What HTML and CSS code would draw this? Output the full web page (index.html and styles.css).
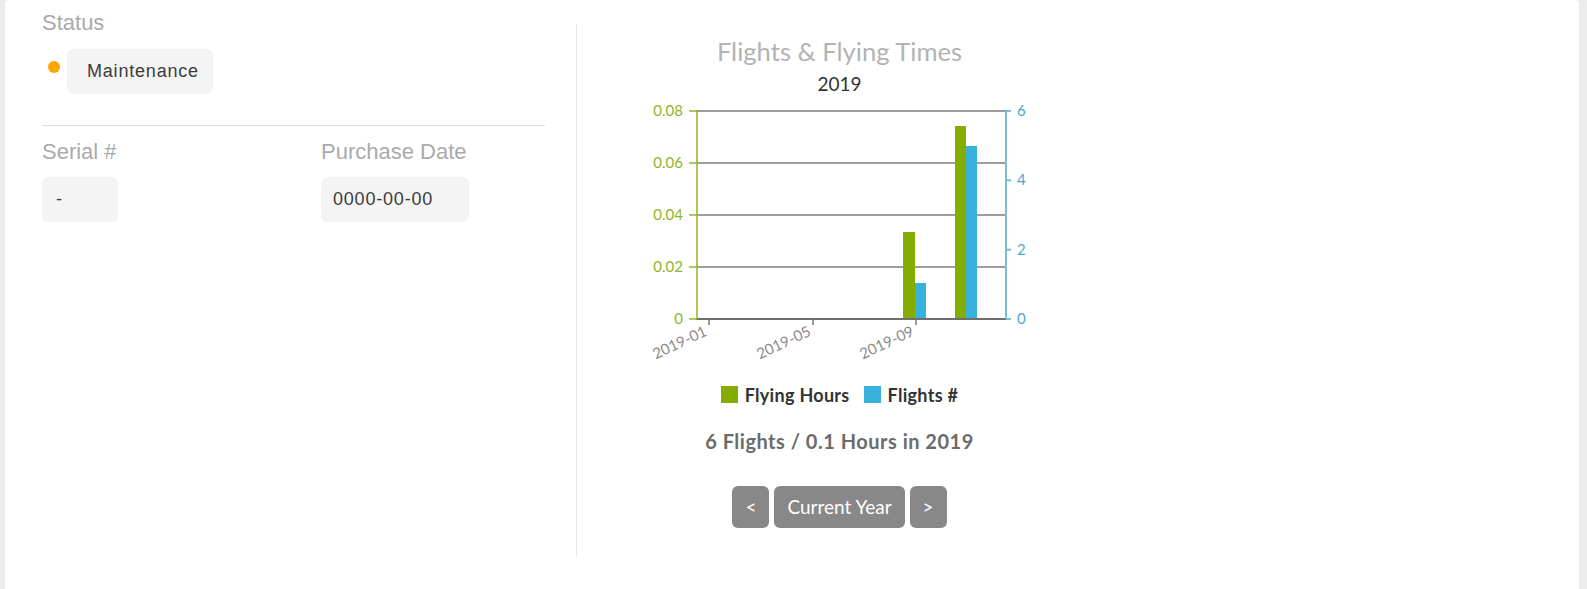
FILE: index.html
```html
<!DOCTYPE html>
<html lang="en">
<head>
<meta charset="utf-8">
<title>Aircraft details</title>
<link rel="stylesheet" href="styles.css">
</head>
<body>
<div class="card">
  <section class="info">
    <div class="label">Status</div>
    <div class="status-row">
      <span class="dot"></span>
      <span class="value value-status">Maintenance</span>
    </div>
    <hr class="sep">
    <div class="fields">
      <div class="field">
        <div class="label">Serial #</div>
        <div class="value value-serial">-</div>
      </div>
      <div class="field">
        <div class="label">Purchase Date</div>
        <div class="value value-date">0000-00-00</div>
      </div>
    </div>
  </section>
  <section class="stats">
    <h2 class="chart-title">Flights &amp; Flying Times</h2>
    <div class="chart-year">2019</div>
    <svg class="chart" width="440" height="270" viewBox="0 0 440 270">
      <g class="grid" stroke="#7c7c7c" stroke-width="1.5">
        <line x1="77" x2="386" y1="11" y2="11"/>
        <line x1="77" x2="386" y1="63" y2="63"/>
        <line x1="77" x2="386" y1="115" y2="115"/>
        <line x1="77" x2="386" y1="167" y2="167"/>
      </g>
      <g class="bars">
        <rect x="283" y="132" width="12" height="87" fill="#85ad00"/>
        <rect x="295" y="183" width="11" height="36" fill="#38b1dc"/>
        <rect x="335" y="26" width="11" height="193" fill="#85ad00"/>
        <rect x="346" y="46" width="11" height="173" fill="#38b1dc"/>
      </g>
      <line x1="76" x2="387" y1="219" y2="219" stroke="#6e6e6e" stroke-width="2"/>
      <g stroke="#7a7a7a" stroke-width="1.5">
        <line x1="89" x2="89" y1="219" y2="225"/>
        <line x1="193" x2="193" y1="219" y2="225"/>
        <line x1="296" x2="296" y1="219" y2="225"/>
      </g>
      <g stroke="#8fb52a" stroke-width="1.5">
        <line x1="77" x2="77" y1="11" y2="219"/>
        <line x1="69" x2="77" y1="11" y2="11"/>
        <line x1="69" x2="77" y1="63" y2="63"/>
        <line x1="69" x2="77" y1="115" y2="115"/>
        <line x1="69" x2="77" y1="167" y2="167"/>
        <line x1="69" x2="77" y1="219" y2="219"/>
      </g>
      <g stroke="#7dbcd8" stroke-width="2">
        <line x1="386" x2="386" y1="11" y2="219"/>
        <line x1="386" x2="391" y1="11" y2="11"/>
        <line x1="386" x2="391" y1="80.3" y2="80.3"/>
        <line x1="386" x2="391" y1="149.7" y2="149.7"/>
        <line x1="386" x2="391" y1="219" y2="219"/>
      </g>
      <g class="ylab-left" text-anchor="end">
        <text x="63" y="16">0.08</text>
        <text x="63" y="68">0.06</text>
        <text x="63" y="120">0.04</text>
        <text x="63" y="172">0.02</text>
        <text x="63" y="224">0</text>
      </g>
      <g class="ylab-right">
        <text x="397" y="16">6</text>
        <text x="397" y="85">4</text>
        <text x="397" y="155">2</text>
        <text x="397" y="224">0</text>
      </g>
      <g class="xlab" text-anchor="end">
        <text transform="translate(88,235) rotate(-25)">2019-01</text>
        <text transform="translate(192,235) rotate(-25)">2019-05</text>
        <text transform="translate(295,235) rotate(-25)">2019-09</text>
      </g>
    </svg>
    <div class="legend">
      <span class="legend-item"><span class="swatch swatch-hours"></span>Flying Hours</span>
      <span class="legend-item"><span class="swatch swatch-flights"></span>Flights #</span>
    </div>
    <div class="summary">6 Flights / 0.1 Hours in 2019</div>
    <div class="pager">
      <button class="btn" type="button">&lt;</button>
      <button class="btn" type="button">Current Year</button>
      <button class="btn" type="button">&gt;</button>
    </div>
  </section>
</div>
</body>
</html>
```

FILE: styles.css
```css
* { box-sizing: border-box; }

html, body {
  margin: 0;
  padding: 0;
  background: #ececec;
  height: 100%;
  overflow: hidden;
}

body {
  padding-left: 5px;
  font-family: "Liberation Sans", Arial, sans-serif;
}

.card {
  width: 1574px;
  min-height: 600px;
  background: #fff;
  border-radius: 4px;
  padding-left: 37px;
  display: grid;
  grid-template-columns: 503px 526px;
  column-gap: 31px;
  align-items: start;
}

/* ---------- left info column ---------- */
.info {
  padding-top: 10px;
}

.label {
  font-size: 22px;
  line-height: 26px;
  color: #aaaaaa;
}

.status-row {
  display: flex;
  align-items: flex-start;
  margin-top: 13px;
}

.dot {
  width: 12px;
  height: 12px;
  border-radius: 50%;
  background: #ffa600;
  margin: 12px 7px 0 6px;
  flex: none;
}

.value {
  display: inline-block;
  height: 45px;
  padding: 12px 12px;
  font-size: 18px;
  line-height: 21px;
  letter-spacing: 0.8px;
  color: #3c3c3c;
  background: #f4f4f4;
  border-radius: 6px;
}

.value-status {
  width: 146px;
  padding-left: 20px;
}

.value-serial {
  width: 76px;
  padding-left: 14px;
}

.value-date {
  width: 148px;
}

.sep {
  border: 0;
  border-top: 1px solid #dddddd;
  margin: 31px 0 0;
  height: 0;
}

.fields {
  display: grid;
  grid-template-columns: 279px 1fr;
  margin-top: 13px;
}

.field .value {
  margin-top: 12px;
}

/* ---------- right stats column ---------- */
.stats {
  margin-top: 24px;
  height: 533px;
  border-left: 1px solid #e6e6e6;
  display: flex;
  flex-direction: column;
  align-items: center;
  font-family: Lato, "Open Sans", sans-serif;
}

.chart-title {
  margin: 12px 0 0;
  font-size: 25.6px;
  line-height: 1.2;
  font-weight: 400;
  color: #b3b3b3;
}

.chart-year {
  margin-top: 6px;
  font-size: 19px;
  line-height: 1.2;
  color: #333333;
}

.chart {
  display: block;
  margin-top: 4px;
  font-family: Lato, "Open Sans", sans-serif;
  font-size: 15px;
}

.ylab-left { fill: #8fb52a; }
.ylab-right { fill: #4ea6cd; }
.xlab { fill: #8a8a8a; }

.legend {
  display: flex;
  gap: 14px;
  margin-top: 15px;
  font-size: 18px;
  line-height: 20px;
  letter-spacing: 0.3px;
  font-weight: 700;
  color: #333333;
}

.legend-item {
  display: flex;
  align-items: center;
  gap: 7px;
}

.swatch {
  width: 17px;
  height: 17px;
  display: inline-block;
}

.swatch-hours { background: #85ad00; }
.swatch-flights { background: #38b1dc; }

.summary {
  margin-top: 24px;
  font-size: 20px;
  line-height: 24px;
  letter-spacing: 0.5px;
  font-weight: 700;
  color: #6b6b6b;
}

.pager {
  display: flex;
  gap: 5px;
  margin-top: 33px;
}

.btn {
  height: 42px;
  padding: 0 13px;
  min-width: 37px;
  border: 0;
  border-radius: 6px;
  background: #888888;
  color: #ffffff;
  font-family: Lato, "Open Sans", sans-serif;
  font-size: 19px;
}
```
